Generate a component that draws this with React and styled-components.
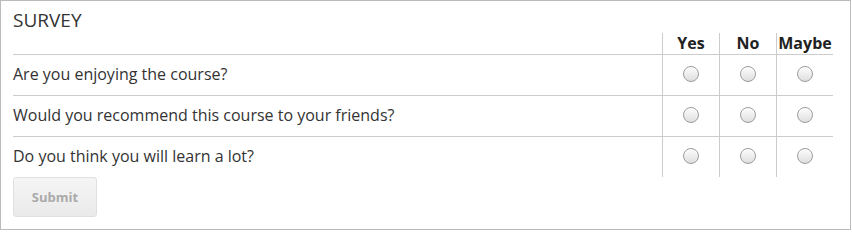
import React from 'react';
import styled, { createGlobalStyle } from 'styled-components';

const GlobalStyle = createGlobalStyle`
  html, body {
    margin: 0;
    padding: 0;
    background: #fff;
  }
  body {
    font-family: "Open Sans", "Liberation Sans", sans-serif;
    color: #333;
  }
`;

const Panel = styled.div`
  box-sizing: border-box;
  width: 851px;
  height: 230px;
  border: 1px solid #bbb;
  padding: 7px 17px 0 12px;
`;

const Title = styled.h2`
  margin: 0;
  font-size: 19px;
  font-weight: 400;
  line-height: 25px;
  color: #333;
`;

const Table = styled.div`
  width: 820px;
`;

const Row = styled.div`
  display: grid;
  grid-template-columns: 649px repeat(3, 57px);
  height: ${(p) => (p.$head ? '21px' : '40px')};
  border-bottom: ${(p) => (p.$last ? 'none' : '1px solid #ccc')};
`;

const Question = styled.div`
  display: flex;
  align-items: center;
  padding-bottom: 3px;
  font-size: 16px;
  color: #333;
`;

const HeadCell = styled.div`
  border-left: ${(p) => (p.$first ? 'none' : '1px solid #ccc')};
  text-align: center;
  font-size: 16px;
  font-weight: 700;
  line-height: 20px;
  color: #222;
`;

const AnswerCell = styled.div`
  display: flex;
  align-items: center;
  justify-content: center;
  padding-bottom: 3px;
  border-left: 1px solid #ccc;
`;

const Radio = styled.input.attrs({ type: 'radio' })`
  appearance: none;
  -webkit-appearance: none;
  box-sizing: border-box;
  width: 16px;
  height: 16px;
  margin: 0;
  border: 1px solid #9c9c9c;
  border-radius: 50%;
  background: linear-gradient(#fdfdfd, #dedede);
  box-shadow: inset 0 1px 0 #fff;
`;

const Submit = styled.button`
  box-sizing: border-box;
  margin-top: 0;
  width: 84px;
  height: 40px;
  border: 1px solid #e0e0e0;
  border-radius: 3px;
  background: linear-gradient(#f5f5f5, #eaeaea);
  font-family: "Open Sans", "Liberation Sans", sans-serif;
  font-size: 13px;
  font-weight: 700;
  color: #aaa;
  padding: 0;
`;

const questions = [
  'Are you enjoying the course?',
  'Would you recommend this course to your friends?',
  'Do you think you will learn a lot?',
];
const answers = ['Yes', 'No', 'Maybe'];

const App = () => (
  <>
    <GlobalStyle />
    <Panel>
      <Title>SURVEY</Title>
      <Table>
        <Row $head>
          <HeadCell $first />
          {answers.map((a) => (
            <HeadCell key={a}>{a}</HeadCell>
          ))}
        </Row>
        {questions.map((q, i) => (
          <Row key={q} $last={i === questions.length - 1}>
            <Question>{q}</Question>
            {answers.map((a) => (
              <AnswerCell key={a}>
                <Radio name={'q' + i} value={a} />
              </AnswerCell>
            ))}
          </Row>
        ))}
      </Table>
      <Submit disabled>Submit</Submit>
    </Panel>
  </>
);

export default App;
